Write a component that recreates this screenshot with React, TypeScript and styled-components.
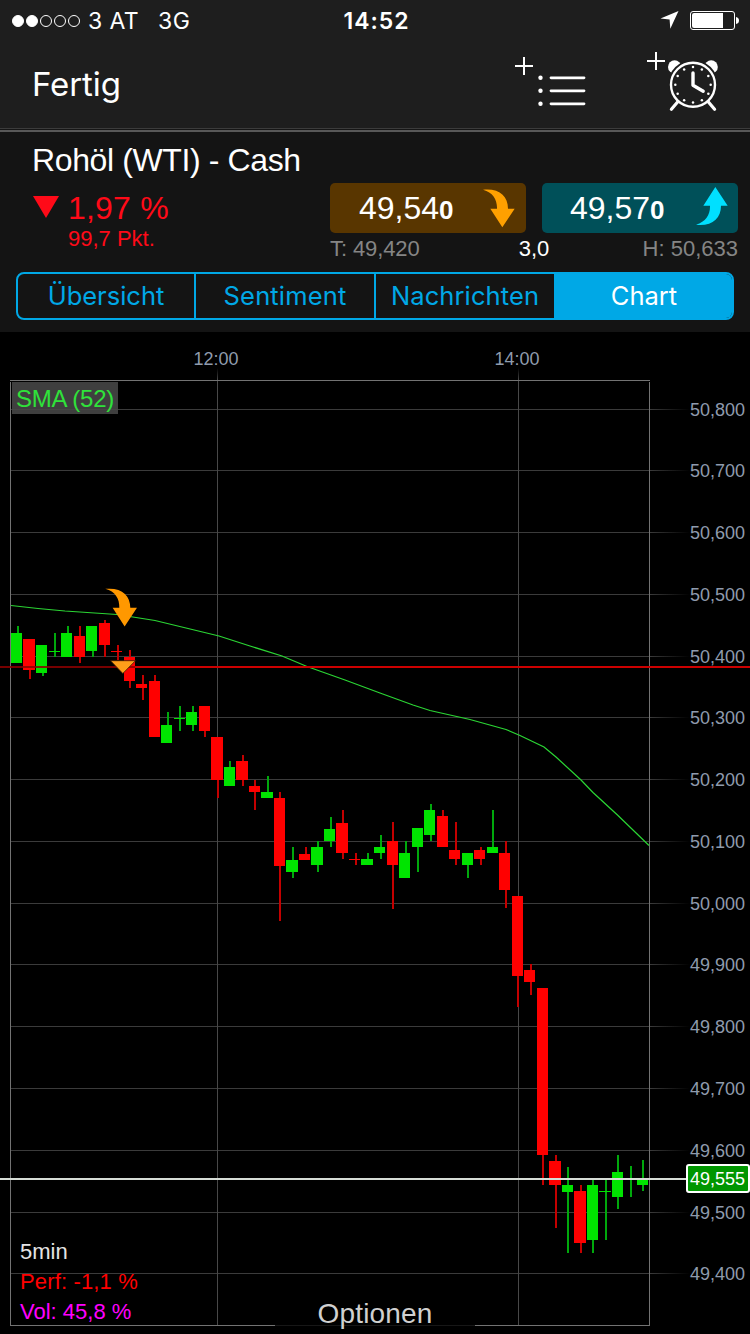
import React from "react";
import styled, { createGlobalStyle } from "styled-components";

const GlobalStyle = createGlobalStyle`
  * { box-sizing: border-box; }
  html, body { margin: 0; padding: 0; background: #000; }
  button { appearance: none; background: none; border: 0; margin: 0; padding: 0; color: inherit; }
`;

const helvetica = `"Liberation Sans", Arial, sans-serif`;
const sanFrancisco = `Inter, Roboto, sans-serif`;

const Screen = styled.main`
  width: 750px;
  height: 1334px;
  display: flex;
  flex-direction: column;
  overflow: hidden;
  background: #000;
  color: #fff;
  font-family: ${helvetica};
`;

const StatusBar = styled.div`
  display: grid;
  grid-template-columns: 1fr auto 1fr;
  align-items: center;
  height: 40px;
  padding: 0 11px 0 12px;
  background: #1e1e1e;
  font: 400 23px/40px ${sanFrancisco};
`;

const Carrier = styled.div`
  display: flex;
  align-items: center;
  white-space: pre;
  line-height: 38px;
  padding-top: 2px;
  letter-spacing: 0.4px;
`;

const Signal = styled.div`
  display: flex;
  gap: 2px;
  margin-right: 8px;
`;

const SignalDot = styled.i<{ $on?: boolean }>`
  width: 12px;
  height: 12px;
  border: 1px solid #fff;
  border-radius: 50%;
  background: ${(p) => (p.$on ? "#fff" : "transparent")};
`;

const Network = styled.span`
  margin-left: 19px;
`;

const Clock = styled.time`
  padding: 2px 0 0 2px;
  line-height: 38px;
  font-weight: 600;
  letter-spacing: 1px;
`;

const StatusIcons = styled.div`
  display: flex;
  justify-content: flex-end;
  align-items: center;
  gap: 11px;
`;

const NavBar = styled.header`
  display: flex;
  justify-content: space-between;
  height: 92px;
  padding: 0 30px 0 32px;
  background: #1e1e1e;
  border-bottom: 2px solid #585858;
  box-shadow: inset 0 -1px #161616, inset 0 -2px #3c3c3c;
`;

const DoneButton = styled.button`
  height: 88px;
  font: 400 33px/88px ${sanFrancisco};
  letter-spacing: -0.1px;
`;

const NavActions = styled.div`
  display: flex;
  gap: 60px;
`;

const Quote = styled.section`
  height: 200px;
  padding: 8px 12px 0 16px;
  background: #141414;
`;

const Instrument = styled.h1`
  margin: 0;
  padding-left: 16px;
  font-size: 32px;
  line-height: 40px;
  font-weight: 400;
  letter-spacing: -0.38px;
`;

const PriceRow = styled.div`
  display: flex;
  justify-content: space-between;
  height: 84px;
  padding: 3px 0 0 17px;
`;

const Change = styled.div`
  display: grid;
  grid-template-columns: 35px auto;
  grid-template-rows: 49px 13px;
  color: #ff0a18;
`;

const Triangle = styled.svg`
  margin-top: 13px;
`;

const Percent = styled.span`
  font-size: 32px;
  line-height: 51px;
  letter-spacing: 0.2px;
`;

const Points = styled.span`
  grid-column: 2;
  font-size: 22px;
  line-height: 13px;
`;

const Dealing = styled.div`
  width: 408px;
`;

const PriceButtons = styled.div`
  display: flex;
  gap: 16px;
`;

const PriceButton = styled.button<{ $buy?: boolean }>`
  display: flex;
  flex: 0 0 196px;
  justify-content: space-between;
  align-items: flex-start;
  height: 50px;
  padding: ${(p) => (p.$buy ? "4px 10px 0 28px" : "6px 11px 0 29px")};
  border-radius: 5px;
  background: ${(p) => (p.$buy ? "#005059" : "#593600")};
  font-family: ${helvetica};
`;

const Price = styled.span<{ $offset?: number }>`
  font-size: 32px;
  line-height: 38px;
  margin-top: ${(p) => p.$offset ?? 0}px;
  b { font-size: 26px; }
`;

const RangeRow = styled.div`
  display: grid;
  grid-template-columns: 1fr auto 1fr;
  font-size: 22px;
  line-height: 31px;
  color: #858585;
`;

const Low = styled.span`
  letter-spacing: -0.1px;
`;

const Spread = styled.span`
  color: #fff;
`;

const High = styled.span`
  text-align: right;
`;

const Tabs = styled.nav`
  display: flex;
  width: 718px;
  height: 48px;
  margin-top: 8px;
  border: 2px solid #00a8e6;
  border-radius: 8px;
  overflow: hidden;
`;

const Tab = styled.button<{ $active?: boolean; $width: number; $spacing?: number }>`
  flex: 0 0 ${(p) => p.$width}px;
  border-right: ${(p) => (p.$active ? 0 : 2)}px solid #00a8e6;
  background: ${(p) => (p.$active ? "#00a8e6" : "transparent")};
  color: ${(p) => (p.$active ? "#fff" : "#00a8e6")};
  font: 400 25.5px/44px ${sanFrancisco};
  letter-spacing: ${(p) => p.$spacing ?? 0}px;
`;

const ChartArea = styled.section`
  position: relative;
  height: 1002px;
`;

const ChartSvg = styled.svg`
  display: block;
  font-family: ${helvetica};
`;

const Indicator = styled.div`
  position: absolute;
  left: 12px;
  top: 50px;
  width: 106px;
  height: 32px;
  padding-left: 4px;
  background: rgba(72, 72, 72, 0.88);
  color: #2fe23a;
  font-size: 24px;
  line-height: 34px;
  letter-spacing: -0.25px;
  white-space: nowrap;
`;

const Stats = styled.div`
  position: absolute;
  left: 20px;
  top: 905px;
  font-size: 22px;
  line-height: 30px;
`;

const Stat = styled.div<{ $color: string; $spacing?: number }>`
  color: ${(p) => p.$color};
  letter-spacing: ${(p) => p.$spacing ?? 0}px;
`;

const OptionsButton = styled.button`
  position: absolute;
  left: 275px;
  top: 962px;
  width: 200px;
  height: 40px;
  background: rgba(0, 0, 0, 0.8);
  color: #d0d0d0;
  font: 28px/38px ${helvetica};
  letter-spacing: 0.15px;
`;

type Candle = [
  x: number, width: number, top: number, bottom: number,
  wick: number, high: number, low: number, up: 0 | 1
];

const candles: Candle[] = [
  [11, 11, 633, 663, 17, 626, 663, 1], [23, 12, 639, 670, 29, 639, 679, 0],
  [36, 11, 645, 673, 42, 645, 676, 1], [49, 11, 651, 652, 54, 633, 657, 1],
  [61, 11, 633, 657, 67, 626, 657, 1], [74, 11, 636, 657, 79, 626, 663, 0],
  [86, 11, 626, 651, 92, 626, 657, 1], [99, 11, 623, 645, 104, 620, 657, 0],
  [111, 11, 651, 652, 117, 645, 660, 0], [124, 11, 657, 681, 129, 650, 688, 0],
  [136, 11, 684, 688, 142, 675, 700, 0], [149, 11, 681, 737, 154, 675, 737, 0],
  [161, 11, 725, 743, 167, 712, 743, 1], [174, 11, 718, 719, 179, 706, 731, 1],
  [186, 11, 712, 725, 192, 706, 731, 1], [199, 11, 706, 731, 204, 706, 737, 0],
  [211, 12, 737, 780, 217, 737, 798, 0], [224, 11, 767, 786, 229, 761, 786, 1],
  [236, 12, 761, 780, 242, 755, 786, 0], [249, 11, 786, 792, 254, 780, 810, 0],
  [261, 12, 792, 798, 267, 776, 798, 1], [274, 11, 798, 866, 279, 792, 921, 0],
  [286, 12, 860, 872, 292, 847, 878, 1], [299, 11, 854, 860, 305, 847, 860, 0],
  [311, 12, 847, 865, 317, 841, 872, 1], [324, 11, 829, 841, 330, 817, 847, 1],
  [336, 12, 823, 853, 342, 810, 859, 0], [349, 11, 859, 860, 355, 853, 865, 0],
  [361, 12, 859, 865, 367, 853, 865, 1], [374, 11, 847, 853, 380, 835, 859, 1],
  [387, 11, 841, 865, 392, 822, 909, 0], [399, 11, 853, 878, 405, 841, 878, 1],
  [412, 11, 828, 847, 417, 828, 872, 1], [424, 11, 810, 835, 430, 804, 841, 1],
  [437, 11, 816, 847, 442, 810, 847, 0], [449, 11, 850, 859, 455, 822, 865, 0],
  [462, 11, 853, 865, 467, 853, 878, 1], [474, 11, 850, 859, 480, 847, 865, 0],
  [487, 11, 847, 853, 492, 810, 853, 1], [499, 11, 853, 890, 505, 841, 908, 0],
  [512, 11, 896, 976, 517, 896, 1007, 0], [524, 11, 970, 982, 530, 964, 995, 0],
  [537, 11, 988, 1155, 542, 988, 1185, 0], [549, 12, 1161, 1185, 555, 1155, 1228, 0],
  [562, 11, 1185, 1192, 567, 1167, 1253, 1], [574, 12, 1191, 1243, 580, 1185, 1253, 0],
  [587, 11, 1185, 1240, 592, 1179, 1253, 1], [599, 12, 1191, 1192, 605, 1179, 1240, 1],
  [612, 11, 1172, 1197, 617, 1155, 1209, 1], [624, 12, 1179, 1180, 630, 1166, 1197, 1],
  [637, 11, 1179, 1185, 642, 1160, 1191, 1],
];

const priceLevels: [number, string][] = [
  [409, "50,800"], [470, "50,700"], [532, "50,600"], [594, "50,500"], [656, "50,400"],
  [717, "50,300"], [779, "50,200"], [841, "50,100"], [903, "50,000"], [964, "49,900"],
  [1026, "49,800"], [1088, "49,700"], [1150, "49,600"], [1212, "49,500"], [1273, "49,400"],
];

const times: [number, string][] = [[217, "12:00"], [518, "14:00"]];

const smaPoints =
  "11,605.5 38,608.5 65,611 117,614.5 136,617.5 155,620.5 186,628 219,636 250,646 282,656 307,666.5 345,680 " +
  "380,693 413,705 430,710.5 470,719.5 506,729.5 520,735.5 544,747 556,757 581,780 593,792.5 618,815.5 649,845.5";

const arrowPath =
  "M0 2C48 -3 75 20 75 59H95L58 115L22 59H42C43 32 30 10 0 2Z";

function SwoopArrow({ color, up }: { color: string; up?: boolean }) {
  return (
    <svg width="32" height="39" viewBox="0 0 96 117">
      <path d={arrowPath} fill={color} transform={up ? "translate(0 115) scale(1 -1)" : undefined} />
    </svg>
  );
}

function ListIcon() {
  return (
    <svg width="73" height="88" viewBox="514 40 73 88" stroke="#fff" fill="#fff">
      <path d="M515 66H533M524 57V75" strokeWidth="2" />
      {[77.8, 90.8, 103.8].map((y) => (
        <g key={y}>
          <circle cx="540.5" cy={y} r="2.2" stroke="none" />
          <path d={`M551 ${y}H584`} strokeWidth="2.8" strokeLinecap="round" />
        </g>
      ))}
    </svg>
  );
}

function AlarmIcon() {
  const ticks = Array.from({ length: 12 }, (_, i) => (i * Math.PI) / 6);
  return (
    <svg width="73" height="88" viewBox="647 40 73 88" fill="none" stroke="#fff">
      <circle cx="674.6" cy="66.9" r="6.6" fill="#fff" stroke="none" />
      <circle cx="711.2" cy="66.9" r="6.6" fill="#fff" stroke="none" />
      <circle cx="693" cy="84.8" r="25" fill="#1e1e1e" stroke="none" />
      <path d="M647 61H665M656 52V70" strokeWidth="2" />
      <circle cx="693" cy="84.8" r="22" strokeWidth="2.4" />
      <path d="M677.6 102L671.4 109.3M708.4 102L714.6 109.3" strokeWidth="3.2" strokeLinecap="round" />
      {ticks.map((a) => (
        <circle key={a} cx={693 + 17.7 * Math.sin(a)} cy={84.8 - 17.7 * Math.cos(a)} r="1.25" fill="#fff" stroke="none" />
      ))}
      <path d="M693 73V85.3L703.2 91.2" strokeWidth="3.4" strokeLinecap="round" strokeLinejoin="round" />
    </svg>
  );
}

function PriceChart() {
  return (
    <ChartSvg width="750" height="1002" viewBox="0 332 750 1002">
      <defs>
        <linearGradient id="fadeRight" x1="0" x2="1">
          <stop offset="0" stopColor="#3b3b3b" />
          <stop offset="1" stopColor="#3b3b3b" stopOpacity="0" />
        </linearGradient>
        <linearGradient id="fadeUp" x1="0" y1="1" x2="0" y2="0">
          <stop offset="0" stopColor="#484848" />
          <stop offset="1" stopColor="#484848" stopOpacity="0" />
        </linearGradient>
      </defs>

      {priceLevels.map(([y]) => (
        <g key={y}>
          <rect x="10" y={y} width="640" height="1" fill="#3b3b3b" />
          <rect x="650" y={y} width="40" height="1" fill="url(#fadeRight)" />
        </g>
      ))}
      {times.map(([x]) => (
        <g key={x}>
          <rect x={x} y="380" width="1" height="946" fill="#484848" />
          <rect x={x} y="368" width="1" height="12" fill="url(#fadeUp)" />
        </g>
      ))}
      <g fill="#737373">
        <rect x="10" y="380" width="640" height="1" />
        <rect x="10" y="1325" width="640" height="1" />
        <rect x="10" y="382" width="1" height="943" />
        <rect x="649" y="382" width="1" height="943" />
      </g>

      <polyline points={smaPoints} fill="none" stroke="#2bd534" strokeWidth="1.2" />

      {candles.map(([x, width, top, bottom, wick, high, low, up]) => (
        <g key={x}>
          <rect x={wick} y={high} width="2" height={low - high} fill={up ? "#00a80c" : "#c40000"} />
          <rect x={x} y={top} width={width} height={bottom - top} fill={up ? "#00e400" : "#ff0000"} />
        </g>
      ))}

      <rect x="0" y="666" width="135" height="2" fill="#8c0000" fillOpacity="0.85" />
      <rect x="135" y="666" width="615" height="2" fill="#cc0000" />
      <path d="M110.500 660.700H135.500L122.800 673.500Z" fill="#ff9f1a" stroke="#3a1800" strokeWidth="0.8" />
      <path d={arrowPath} fill="#ff9800" transform="translate(105.300 588.200) scale(0.3333)" />

      <rect x="0" y="1178" width="687" height="2" fill="#d6dcd6" />

      <g fill="#8f9bad" fontSize="18">
        {priceLevels.map(([y, label]) => (
          <text key={label} x="690" y={y + 7}>{label}</text>
        ))}
        {times.map(([x, label]) => (
          <text key={label} x={x - 1} y="365" textAnchor="middle">{label}</text>
        ))}
      </g>

      <rect x="687" y="1165" width="62" height="27" rx="2" fill="#009600" stroke="#fff" strokeWidth="2" />
      <text x="690" y="1185" fontSize="18" fill="#fff">49,555</text>
    </ChartSvg>
  );
}

export default function App() {
  return (
    <Screen>
      <GlobalStyle />
      <StatusBar>
        <Carrier>
          <Signal>
            <SignalDot $on />
            <SignalDot $on />
            <SignalDot />
            <SignalDot />
            <SignalDot />
          </Signal>
          <span>3 AT</span>
          <Network>3G</Network>
        </Carrier>
        <Clock>14:52</Clock>
        <StatusIcons>
          <svg width="19" height="20" viewBox="660 11 19 20">
            <path d="M660.500 19.500L678.500 12L670.300 29.700L669.600 20.600Z" fill="#fff" />
          </svg>
          <svg width="49" height="19" viewBox="690 11 49 19">
            <rect x="690.500" y="11.500" width="44" height="18" rx="2.500" fill="none" stroke="#fff" />
            <path d="M694 13H723V28H694Q692 28 692 26V15Q692 13 694 13Z" fill="#fff" />
            <path d="M736 17Q739 17.500 739 20.500T736 24Z" fill="#fff" />
          </svg>
        </StatusIcons>
      </StatusBar>

      <NavBar>
        <DoneButton>Fertig</DoneButton>
        <NavActions>
          <ListIcon />
          <AlarmIcon />
        </NavActions>
      </NavBar>

      <Quote>
        <Instrument>Rohöl (WTI) - Cash</Instrument>
        <PriceRow>
          <Change>
            <Triangle width="26" height="22" viewBox="0 0 26 22">
              <path d="M0 0H26L13 22Z" fill="#ff0a18" />
            </Triangle>
            <Percent>1,97 %</Percent>
            <Points>99,7 Pkt.</Points>
          </Change>
          <Dealing>
            <PriceButtons>
              <PriceButton>
                <Price>49,54<b>0</b></Price>
                <SwoopArrow color="#ffa000" />
              </PriceButton>
              <PriceButton $buy>
                <Price $offset={2}>49,57<b>0</b></Price>
                <SwoopArrow color="#00e0ff" up />
              </PriceButton>
            </PriceButtons>
            <RangeRow>
              <Low>T: 49,420</Low>
              <Spread>3,0</Spread>
              <High>H: 50,633</High>
            </RangeRow>
          </Dealing>
        </PriceRow>
        <Tabs>
          <Tab $width={178}>Übersicht</Tab>
          <Tab $width={180} $spacing={0.15}>Sentiment</Tab>
          <Tab $width={180} $spacing={0.1}>Nachrichten</Tab>
          <Tab $width={176} $active>Chart</Tab>
        </Tabs>
      </Quote>

      <ChartArea>
        <PriceChart />
        <Indicator>SMA (52)</Indicator>
        <Stats>
          <Stat $color="#e4e4e4">5min</Stat>
          <Stat $color="#ff0000" $spacing={0.15}>Perf: -1,1 %</Stat>
          <Stat $color="#ff00ff">Vol: 45,8 %</Stat>
        </Stats>
        <OptionsButton>Optionen</OptionsButton>
      </ChartArea>
    </Screen>
  );
}
